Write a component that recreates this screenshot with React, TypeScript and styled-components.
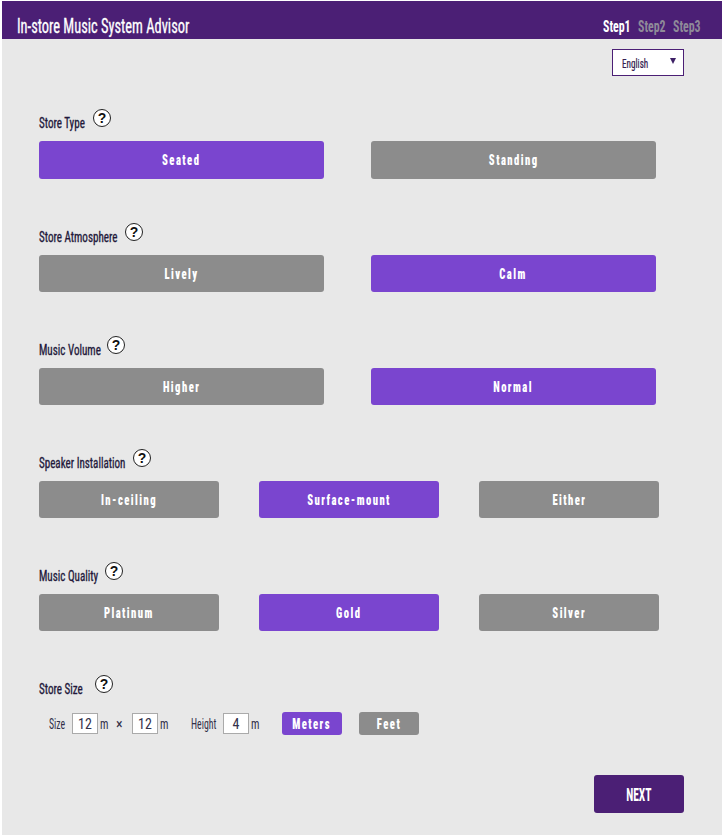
import React from "react";
import styled, { createGlobalStyle } from "styled-components";

const FONT = `"Roboto Condensed", "Roboto", "Liberation Sans", sans-serif`;

const Global = createGlobalStyle`
  html, body { margin: 0; padding: 0; background: #fff; }
  body { font-family: ${FONT}; }
`;

const Page = styled.div`
  width: 720px;
  height: 834px;
  margin: 1px 0 0 2px;
  background: #e8e8e8;
  display: flex;
  flex-direction: column;
`;

const Header = styled.header`
  height: 38px;
  box-sizing: border-box;
  flex: none;
  background: #4b1f75;
  display: flex;
  align-items: center;
  justify-content: space-between;
  padding: 0 21px 0 15px;
`;

/* Narrow display type: the text is squeezed horizontally inside a box of the wanted width */
const Narrow = styled.span<{ $w: number; $k: number }>`
  display: inline-block;
  flex: none;
  width: ${(p) => p.$w}px;
  white-space: nowrap;
  transform: scaleX(${(p) => p.$k});
  transform-origin: left center;
`;

const Title = styled(Narrow)`
  font-size: 20px;
  font-weight: 400;
  color: #fff;
  padding-top: 11px;
  -webkit-text-stroke: 0.3px #fff;
  transform: scaleX(0.72);
`;

const Steps = styled.div`
  display: flex;
  gap: 7px;
  padding-top: 13px;
`;

const Step = styled(Narrow)<{ $active?: boolean }>`
  font-size: 16px;
  font-weight: 700;
  color: ${(p) => (p.$active ? "#fff" : "#8f8a99")};
`;

const Main = styled.main`
  flex: 1;
  display: flex;
  flex-direction: column;
  padding: 10px 38px 0 37px;
`;

const LangRow = styled.div`
  display: flex;
  justify-content: flex-end;
  height: 27px;
  margin-bottom: 29px;
`;

const LangBox = styled.div`
  width: 72px;
  height: 27px;
  box-sizing: border-box;
  border: 1px solid #4b1f75;
  background: #fff;
  display: flex;
  align-items: center;
  justify-content: space-between;
  padding: 3px 7px 0 9px;
  color: #33204f;
`;

const LangText = styled(Narrow)`
  font-size: 12px;
  -webkit-text-stroke: 0.2px #33204f;
`;

const Caret = styled.span`
  width: 0;
  height: 0;
  margin-top: -7px;
  border-left: 3.5px solid transparent;
  border-right: 3.5px solid transparent;
  border-top: 6px solid #3d2066;
`;

const Section = styled.section<{ $first?: boolean }>`
  height: ${(p) => (p.$first ? 114 : 113)}px;
  flex: none;
  display: flex;
  flex-direction: column;
`;

const LabelRow = styled.div`
  height: 28px;
  display: flex;
  align-items: flex-end;
  padding-bottom: 5px;
  box-sizing: border-box;
  margin-top: 3px;
`;

const Label = styled(Narrow)`
  font-size: 14px;
  color: #22183a;
  -webkit-text-stroke: 0.3px #22183a;
  line-height: 16px;
`;

const Help = styled.span<{ $gap: number }>`
  width: 18px;
  height: 18px;
  flex: none;
  box-sizing: border-box;
  margin-left: ${(p) => p.$gap}px;
  margin-bottom: 4px;
  border: 1px solid #222;
  border-radius: 50%;
  background: #fff;
  color: #111;
  font-family: "Liberation Sans", sans-serif;
  font-size: 14px;
  font-weight: 700;
  display: flex;
  align-items: center;
  justify-content: center;
  line-height: 1;
`;

const Grid = styled.div<{ $cols: number }>`
  display: grid;
  grid-template-columns: ${(p) => (p.$cols === 2 ? "285px 285px" : "180px 180px 180px")};
  column-gap: ${(p) => (p.$cols === 2 ? 47 : 40)}px;
  margin-top: 5px;
`;

const Choice = styled.div<{ $on?: boolean; $tall?: boolean }>`
  height: ${(p) => (p.$tall ? 38 : 37)}px;
  border-radius: 3px;
  background: ${(p) => (p.$on ? "#7a45cf" : "#8c8c8c")};
  color: #fff;
  display: flex;
  align-items: center;
  justify-content: center;
`;

const Caps = styled.span`
  display: inline-block;
  white-space: nowrap;
  font-size: 14px;
  font-weight: 900;
  letter-spacing: 1.9px;
  transform: scaleX(0.76);
`;

const SizeRow = styled.div`
  display: flex;
  align-items: center;
  height: 23px;
  margin-top: 10px;
  padding-left: 10px;
  color: #33304a;
`;

const SizeText = styled(Narrow)<{ $l?: number; $r?: number }>`
  font-size: 14px;
  margin-left: ${(p) => p.$l ?? 0}px;
  margin-right: ${(p) => p.$r ?? 0}px;
`;

const Num = styled.div`
  width: 26px;
  height: 21px;
  box-sizing: border-box;
  border: 1px solid #aaa;
  background: #fff;
  display: flex;
  align-items: center;
  justify-content: center;
  font-size: 14px;
  color: #33304a;
`;

const UnitBtn = styled.div<{ $on?: boolean }>`
  width: 60px;
  height: 23px;
  margin-right: 17px;
  border-radius: 3px;
  background: ${(p) => (p.$on ? "#7a45cf" : "#8c8c8c")};
  color: #fff;
  display: flex;
  align-items: center;
  justify-content: center;
`;

const Footer = styled.div`
  display: flex;
  justify-content: flex-end;
  margin-top: -9px;
`;

const Next = styled.div`
  width: 90px;
  height: 38px;
  border-radius: 3px;
  background: #4b1f75;
  color: #fff;
  display: flex;
  align-items: center;
  justify-content: center;
`;

const NextText = styled.span`
  font-size: 18px;
  font-weight: 700;
  transform: scaleX(0.64);
`;

const rows = [
  { label: "Store Type", w: 47, gap: 7, opts: ["Seated", "Standing"], on: 0, tall: true },
  { label: "Store Atmosphere", w: 78, gap: 8, opts: ["Lively", "Calm"], on: 1 },
  { label: "Music Volume", w: 61, gap: 7, opts: ["Higher", "Normal"], on: 1 },
  { label: "Speaker Installation", w: 87, gap: 7, opts: ["In-ceiling", "Surface-mount", "Either"], on: 1 },
  { label: "Music Quality", w: 60, gap: 6, opts: ["Platinum", "Gold", "Silver"], on: 1 },
];

export default function App() {
  return (
    <>
      <Global />
      <Page>
        <Header>
          <Title $w={172} $k={0.72}>In-store Music System Advisor</Title>
          <Steps>
            <Step $w={28} $k={0.74} $active>Step1</Step>
            <Step $w={28} $k={0.74}>Step2</Step>
            <Step $w={28} $k={0.74}>Step3</Step>
          </Steps>
        </Header>
        <Main>
          <LangRow>
            <LangBox>
              <LangText $w={28} $k={0.76}>English</LangText>
              <Caret />
            </LangBox>
          </LangRow>
          {rows.map((r) => (
            <Section key={r.label} $first={r.tall}>
              <LabelRow>
                <Label $w={r.w} $k={0.79}>{r.label}</Label>
                <Help $gap={r.gap}>?</Help>
              </LabelRow>
              <Grid $cols={r.opts.length}>
                {r.opts.map((o, i) => (
                  <Choice key={o} $on={i === r.on} $tall={r.tall}>
                    <Caps>{o}</Caps>
                  </Choice>
                ))}
              </Grid>
            </Section>
          ))}
          <Section>
            <LabelRow>
              <Label $w={44} $k={0.79}>Store Size</Label>
              <Help $gap={12}>?</Help>
            </LabelRow>
            <SizeRow>
              <SizeText $w={16} $k={0.7} $r={7}>Size</SizeText>
              <Num>12</Num>
              <SizeText $w={8} $k={0.8} $l={2} $r={8}>m</SizeText>
              <SizeText $w={8} $k={1} $r={8}>×</SizeText>
              <Num>12</Num>
              <SizeText $w={8} $k={0.8} $l={2} $r={23}>m</SizeText>
              <SizeText $w={25} $k={0.7} $r={7}>Height</SizeText>
              <Num>4</Num>
              <SizeText $w={8} $k={0.8} $l={2} $r={23}>m</SizeText>
              <UnitBtn $on><Caps>Meters</Caps></UnitBtn>
              <UnitBtn><Caps>Feet</Caps></UnitBtn>
            </SizeRow>
          </Section>
          <Footer>
            <Next><NextText>NEXT</NextText></Next>
          </Footer>
        </Main>
      </Page>
    </>
  );
}
